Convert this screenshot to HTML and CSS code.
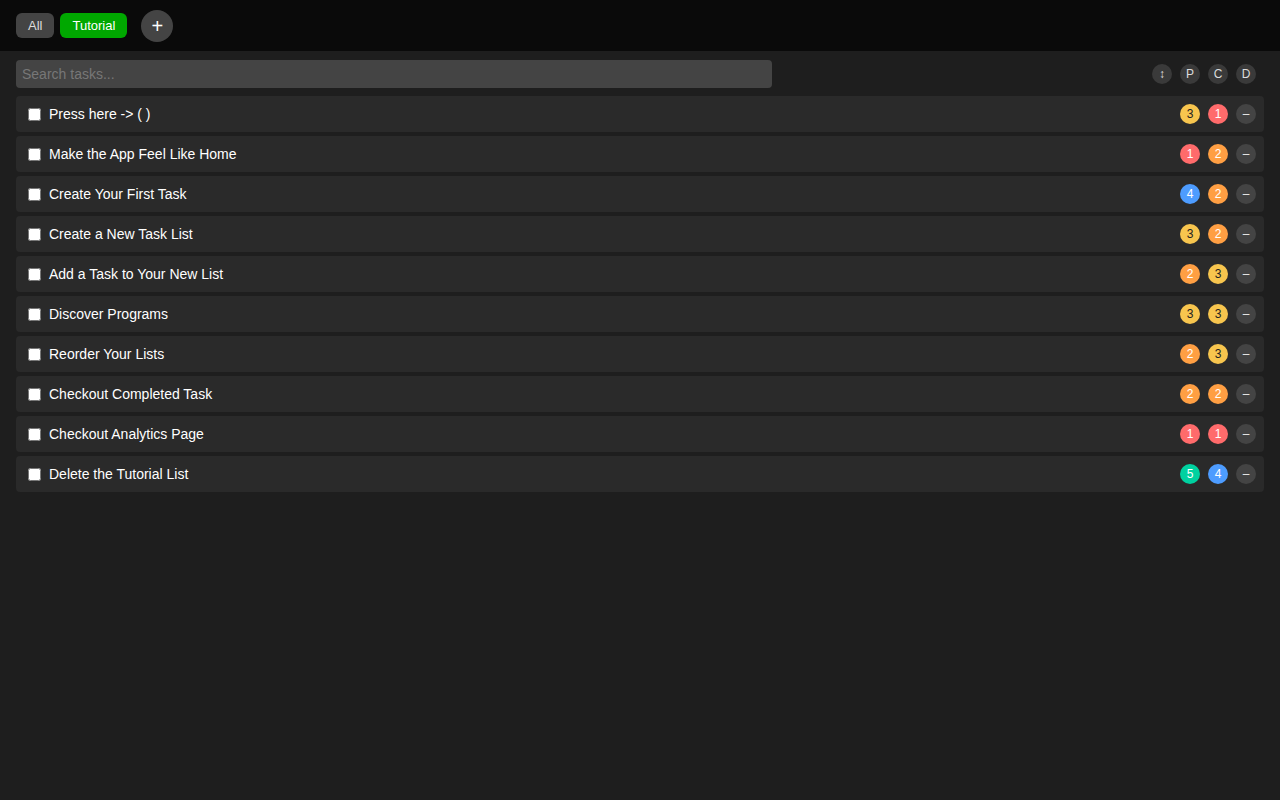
FILE: index.html
```html
<!DOCTYPE html>
<html>
<head>
<meta charset="utf-8">
<link rel="stylesheet" href="styles.css">
</head>
<body>
<header class="topbar">
  <button class="tab">All</button>
  <button class="tab tab-active">Tutorial</button>
  <button class="add">+</button>
</header>
<main class="content">
  <div class="toolbar">
    <input class="search" type="text" placeholder="Search tasks...">
    <div class="sorts">
      <span class="sort">&#x2195;</span>
      <span class="sort">P</span>
      <span class="sort">C</span>
      <span class="sort">D</span>
    </div>
  </div>
  <ul class="tasks">
    <li class="task"><input type="checkbox" class="check"><span class="title">Press here -&gt; ( )</span><span class="badge yellow">3</span><span class="badge red">1</span><span class="badge remove">&ndash;</span></li>
    <li class="task"><input type="checkbox" class="check"><span class="title">Make the App Feel Like Home</span><span class="badge red">1</span><span class="badge orange">2</span><span class="badge remove">&ndash;</span></li>
    <li class="task"><input type="checkbox" class="check"><span class="title">Create Your First Task</span><span class="badge blue">4</span><span class="badge orange">2</span><span class="badge remove">&ndash;</span></li>
    <li class="task"><input type="checkbox" class="check"><span class="title">Create a New Task List</span><span class="badge yellow">3</span><span class="badge orange">2</span><span class="badge remove">&ndash;</span></li>
    <li class="task"><input type="checkbox" class="check"><span class="title">Add a Task to Your New List</span><span class="badge orange">2</span><span class="badge yellow">3</span><span class="badge remove">&ndash;</span></li>
    <li class="task"><input type="checkbox" class="check"><span class="title">Discover Programs</span><span class="badge yellow">3</span><span class="badge yellow">3</span><span class="badge remove">&ndash;</span></li>
    <li class="task"><input type="checkbox" class="check"><span class="title">Reorder Your Lists</span><span class="badge orange">2</span><span class="badge yellow">3</span><span class="badge remove">&ndash;</span></li>
    <li class="task"><input type="checkbox" class="check"><span class="title">Checkout Completed Task</span><span class="badge orange">2</span><span class="badge orange">2</span><span class="badge remove">&ndash;</span></li>
    <li class="task"><input type="checkbox" class="check"><span class="title">Checkout Analytics Page</span><span class="badge red">1</span><span class="badge red">1</span><span class="badge remove">&ndash;</span></li>
    <li class="task"><input type="checkbox" class="check"><span class="title">Delete the Tutorial List</span><span class="badge teal">5</span><span class="badge blue">4</span><span class="badge remove">&ndash;</span></li>
  </ul>
</main>
</body>
</html>
```
FILE: styles.css
```css
* { box-sizing: border-box; }
html, body { margin: 0; padding: 0; }
body {
  background: #1e1e1e;
  color: #fff;
  font-family: "Liberation Sans", Arial, sans-serif;
  min-height: 800px;
}
.topbar {
  height: 51px;
  background: #0a0a0a;
  display: flex;
  align-items: center;
  padding: 0 16px;
  gap: 6px;
}
.tab {
  height: 25px;
  border: none;
  border-radius: 6px;
  background: #444;
  color: #ddd;
  font-family: inherit;
  font-size: 13px;
  padding: 0 12px;
  cursor: pointer;
}
.tab-active {
  background: #00a800;
  color: #fff;
}
.add {
  margin-left: 8px;
  width: 32px;
  height: 32px;
  border-radius: 50%;
  border: none;
  background: #444;
  color: #fff;
  font-family: inherit;
  font-size: 20px;
  line-height: 32px;
  padding: 0;
}
.content {
  padding: 9px 16px;
}
.toolbar {
  display: flex;
  align-items: center;
  justify-content: space-between;
  height: 28px;
  margin-bottom: 8px;
}
.search {
  width: 756px;
  height: 28px;
  background: #444;
  border: none;
  border-radius: 4px;
  padding: 0 6px;
  color: #ddd;
  font-family: inherit;
  font-size: 14px;
  outline: none;
}
.search::placeholder { color: #777; }
.sorts {
  display: flex;
  gap: 8px;
  padding-right: 8px;
}
.sort {
  width: 20px;
  height: 20px;
  border-radius: 50%;
  background: #3a3a3a;
  color: #ddd;
  font-size: 12px;
  display: flex;
  align-items: center;
  justify-content: center;
}
.tasks {
  list-style: none;
  margin: 0;
  padding: 0;
  display: flex;
  flex-direction: column;
  gap: 4px;
}
.task {
  height: 36px;
  background: #2a2a2a;
  border-radius: 4px;
  display: flex;
  align-items: center;
  gap: 8px;
  padding: 0 8px 0 12px;
}
.check {
  width: 13px;
  height: 13px;
  margin: 0;
}
.title {
  flex: 1;
  font-size: 14px;
  color: #fff;
}
.badge {
  width: 20px;
  height: 20px;
  border-radius: 50%;
  font-size: 12px;
  color: #fff;
  display: flex;
  align-items: center;
  justify-content: center;
}
.yellow { background: #f7c54e; color: #222; }
.red { background: #ff6b6b; }
.orange { background: #ff9f43; }
.blue { background: #4d9cff; }
.teal { background: #00d1a0; }
.remove { background: #444; color: #eee; font-size: 12px; }
```
